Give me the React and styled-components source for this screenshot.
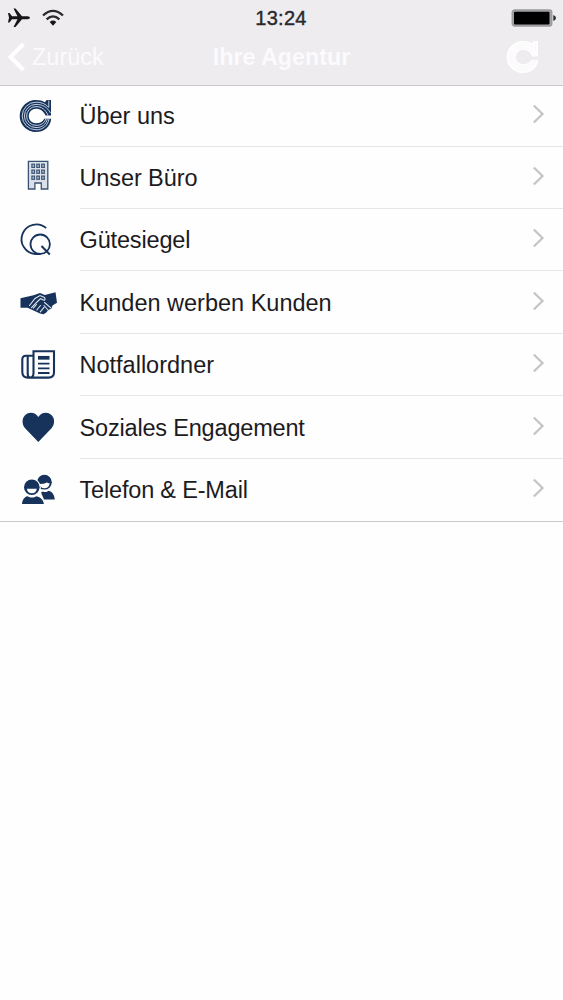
import React from 'react';
import styled, { createGlobalStyle } from 'styled-components';

const NAVY = '#17335c';

const GlobalStyle = createGlobalStyle`
  body {
    margin: 0;
    background: #fefefe;
    font-family: "Liberation Sans", Arial, sans-serif;
  }
`

const Screen = styled.div`
  min-height: 1000px;
  overflow: hidden;
  background: #fefefe;
`

const Header = styled.header`
  box-sizing: border-box;
  height: 86px;
  background: #eeecef;
  border-bottom: 1px solid #c9c8ca;
`

const StatusBar = styled.div`
  display: grid;
  grid-template-columns: 1fr auto 1fr;
  align-items: center;
  height: 36px;
  padding: 0 7px 0 7px;
`

const Signals = styled.div`
  display: flex;
  align-items: center;
  gap: 11px;
`

const Clock = styled.span`
  margin-right: 1px;
  font-size: 20px;
  line-height: 36px;
  letter-spacing: 0.3px;
  color: #29282b;
  -webkit-text-stroke: 0.4px #29282b;
`

const Battery = styled.svg`
  justify-self: end;
`

const NavBar = styled.nav`
  display: grid;
  grid-template-columns: 1fr auto 1fr;
  align-items: center;
  height: 42px;
  padding: 0 22px 0 7px;
  color: #fff;
  font-size: 23.5px;
`

const BackButton = styled.a`
  display: flex;
  align-items: center;
  gap: 6px;
  color: #fbfafc;
`

const Title = styled.h1`
  margin: 0 0 0 15px;
  font-size: 23.3px;
  font-weight: bold;
  color: #fbfafc;
`

const NavLogo = styled.svg`
  justify-self: end;
`

const List = styled.ul`
  display: grid;
  grid-template-rows: 61px 62px 62px 63px 62px 63px 62px;
  margin: 0;
  padding: 0;
  list-style: none;
  border-bottom: 1px solid #c9c8ca;
`

const Row = styled.li`
  display: grid;
  grid-template-columns: 64px 1fr;
  padding-left: 16px;
`

const RowIcon = styled.svg`
  width: 44px;
  height: 44px;
  margin-top: 8px;
`

const RowBody = styled.div`
  display: flex;
  align-items: center;
  justify-content: space-between;
  padding: ${props => props.$first ? '0' : '1px'} 18px 0 0;
  border-bottom: 1px solid ${props => props.$last ? 'transparent' : '#e6e5e8'};
`

const Label = styled.span`
  margin-left: -0.5px;
  font-size: 23.5px;
  line-height: 28px;
  letter-spacing: ${props => props.$tracking || 0}px;
  color: #1c1b1e;
  white-space: nowrap;
`

const Chevron = styled.svg`
  margin-top: -4px;
`

const LogoShape = ({ color, gap }) => (
  <g fill="none">
    <path d="M35 5.900V21.600H29.600C27.600 17 24.500 14.700 20 14.700A7.300 7.300 0 0 0 20 29.300C23.800 29.300 26.800 27.700 28.200 24.700H35.200C34.500 33 28 38 19.700 38A16 16 0 0 1 19.700 6C24 6 26.500 6.700 28.800 8.300L30.700 5.900Z" fill={color} />
    <g stroke={gap} strokeWidth="1">
      <path d="M32.800 6.500V13.500C29.500 9.800 25.500 8.200 20 8.200A13.800 13.800 0 0 0 20 35.800C27 35.800 31.800 31.500 33 25" />
      <path d="M34.500 19C31.300 13 26.500 10.400 20 10.400A11.600 11.600 0 0 0 20 33.600C26 33.600 30 30.500 31.300 25" />
      <path d="M32 21.300C29.500 15.500 25.800 12.600 20 12.600A9.400 9.400 0 0 0 20 31.400C25 31.400 28.300 29 29.700 25" />
    </g>
  </g>
)

const BuildingShape = () => (
  <g stroke={NAVY}>
    <path d="M12.400 6.300H31.800V34H25.300V28H18.900V34H12.400Z" fill="#d9e0e9" stroke="#3b5373" strokeWidth="1.300" />
    {[10.8, 16.7, 22.7].map(y => [17.2, 22.1, 27].map(x => (
      <rect key={x + '-' + y} x={x - 1.3} y={y - 1.6} width="2.6" height="3.2" fill="#b9c5d3" stroke="#3f5777" strokeWidth="1.2" />
    )))}
  </g>
)

const SealShape = () => (
  <g fill="none" stroke={NAVY} strokeWidth="1.8">
    <path d="M30.200 11.200A14.800 14.800 0 1 0 19.500 37H24.500" />
    <circle cx="24.200" cy="27.200" r="9.700" />
    <path d="M25.500 29L33.800 37.500" strokeWidth="2" />
  </g>
)

const HandshakeShape = () => (
  <g>
    <path d="M4.500 19.300L17.500 16.300L24 14L28.800 16L39.500 13.300L41 23.700L36.500 26.500L35.500 29.500L32.500 31L30 33.700L27.500 35.300L24 34.500L11.500 28.700H4.500Z" fill={NAVY} />
    <g fill="none" stroke="#dfe6ee" strokeWidth="1.100" strokeLinecap="round">
      <path d="M13.500 26.500L19 19.500L24 16.500L28.500 18.500C30 20.500 28.500 22 26.500 20.500L24.500 19.700L21.500 22.500L15.500 28.700" />
      <path d="M20.500 25.500L17.300 29.200M24.500 26.500L20.800 31M28 28.300L24.300 32.800M28.500 23.500L34.800 28.800M28 26.500L32 31" />
    </g>
  </g>
)

const NewspaperShape = () => (
  <g fill="none" stroke={NAVY} strokeWidth="2.100">
    <path d="M17.300 13.800H10C7.500 13.800 6.300 15.200 6.300 17.500V30C6.300 33.500 8.500 35.600 12 35.600H32.500C36 35.600 38 33.500 38 30.500V9.200H17.500V31C17.500 33.800 16.500 35.500 14.300 35.500C12.500 35.500 11.700 34 11.700 31.500V14" />
    <path d="M22 15.800H33.500" strokeWidth="3.700" />
    <path d="M22 21.700H33.500M22 26.400H33.500M22 31H33.500" strokeWidth="1.800" />
  </g>
)

const HeartShape = () => (
  <path d="M22.300 38L9.300 24.500C6 21 5.500 14.800 9 11.300C13 7.300 19.500 8.300 22.300 13C25.200 8.300 31.700 7.300 35.700 11.300C39.200 14.800 38.700 21 35.300 24.500Z" fill={NAVY} />
)

const PeopleShape = () => (
  <g>
    <circle cx="28.400" cy="15.200" r="7.400" fill={NAVY} />
    <path d="M23.500 17Q28 17 31 15.500Q33 16.500 33.800 16.500C33 20 31 21.300 28.400 21.300C25.500 21.300 24 19.500 23.500 17Z" fill="#fefefe" />
    <path d="M25 25.500L27 24.500C29 25.500 31 25 32.500 23.700C36.500 24.500 38.300 28 38.800 32.400H28Z" fill={NAVY} />
    <circle cx="15.800" cy="20.300" r="9" fill="#fefefe" />
    <circle cx="15.800" cy="20.300" r="7.800" fill={NAVY} />
    <path d="M10.800 21.700H20.800C20.400 24.800 18.500 26.300 15.800 26.300C13.200 26.300 11.200 24.800 10.800 21.700Z" fill="#fefefe" />
    <path d="M6 37C6.200 33 8.500 29.700 11.500 29.200C14 31 17.800 31 20.500 29.200C24.500 30 27.500 33 27.900 37Z" fill={NAVY} />
  </g>
)

const items = [
  { label: 'Über uns', icon: <LogoShape color={NAVY} gap="#c3d0dd" /> },
  { label: 'Unser Büro', icon: <BuildingShape />, tracking: -0.1 },
  { label: 'Gütesiegel', icon: <SealShape />, tracking: -0.15 },
  { label: 'Kunden werben Kunden', icon: <HandshakeShape /> },
  { label: 'Notfallordner', icon: <NewspaperShape /> },
  { label: 'Soziales Engagement', icon: <HeartShape />, tracking: -0.18 },
  { label: 'Telefon & E-Mail', icon: <PeopleShape />, tracking: -0.18 },
];

class App extends React.Component{
  renderStatusBar(){
    return (
      <StatusBar>
        <Signals>
          <svg width="24" height="20" viewBox="0 0 24 20">
            <path d="M1 5H2.500L5 8.300H10.500L6.500 0.500H8.500L15 8.300H20.500Q23 8.700 23 9.800Q23 11 20.500 11.300H15L8.500 19H6.500L10.500 11.300H5L2.500 14.500H1L2 9.800Z" fill="#161518" />
          </svg>
          <svg width="22" height="18" viewBox="0 0 22 18">
            <g fill="none" stroke="#29282b" strokeWidth="2.300">
              <path d="M1 6.500Q11 -2.700 21 6.500" />
              <path d="M4.600 10.300Q11 4.500 17.400 10.300" />
            </g>
            <path d="M7.700 13Q11 10.200 14.300 13L11 16.700Z" fill="#161518" />
          </svg>
        </Signals>
        <Clock>13:24</Clock>
        <Battery width="45" height="18" viewBox="0 0 45 18">
          <rect x="1.200" y="1" width="39.600" height="16" rx="2.500" fill="#a3a2a5" stroke="#9a999c" strokeWidth="1.300" />
          <rect x="3" y="2.700" width="35.500" height="12.700" rx="1" fill="#000" />
          <path d="M42.300 6Q45 7 45 9Q45 11 42.300 12Z" fill="#29282b" />
        </Battery>
      </StatusBar>
    )
  }

  render(){
    return (
      <Screen>
        <GlobalStyle />
        <Header>
          {this.renderStatusBar()}
          <NavBar>
            <BackButton>
              <svg width="19" height="30" viewBox="0 0 19 30">
                <path d="M16.500 2L3.500 15L16.500 28" fill="none" stroke="#fff" strokeWidth="4" />
              </svg>
              Zurück
            </BackButton>
            <Title>Ihre Agentur</Title>
            <NavLogo width="36" height="36" viewBox="2 4 36 36">
              <LogoShape color="#fff" gap="#f8f7f9" />
            </NavLogo>
          </NavBar>
        </Header>
        <List>
          {items.map((item, i) => (
            <Row key={item.label}>
              <RowIcon viewBox="0 0 44 44">{item.icon}</RowIcon>
              <RowBody $first={i === 0} $last={i === items.length - 1}>
                <Label $tracking={item.tracking}>{item.label}</Label>
                <Chevron width="13" height="20" viewBox="0 0 13 20">
                  <path d="M1.800 1.500L10.500 10L1.800 18.500" fill="none" stroke="#c5c4c9" strokeWidth="2.300" />
                </Chevron>
              </RowBody>
            </Row>
          ))}
        </List>
      </Screen>
    )
  }
}

export default App
